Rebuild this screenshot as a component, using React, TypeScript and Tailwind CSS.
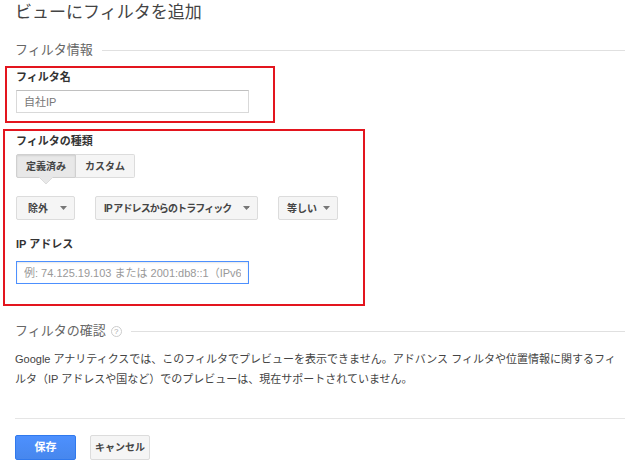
import React from "react";

const font = "font-['Liberation_Sans','Noto_Sans_CJK_JP',sans-serif]";

function Caret() {
  return (
    <svg width="7" height="4" viewBox="0 0 7 4" className="shrink-0">
      <path d="M0 0h7L3.5 4z" fill="#777" />
    </svg>
  );
}

function Dropdown({ label, width, extra = "" }: { label: string; width: string; extra?: string }) {
  return (
    <div
      className={`${width} h-[24px] shrink-0 flex items-center justify-between pl-[8px] pr-[7px] bg-[#f5f5f5] border border-[#dcdcdc] rounded-[2px] text-[10px] font-bold text-[#444] whitespace-nowrap`}
    >
      <span className={extra}>{label}</span>
      <Caret />
    </div>
  );
}

function SectionHeader({ title, help }: { title: string; help?: boolean }) {
  return (
    <div className="flex items-center h-[16px]">
      <span className="text-[13px] leading-[16px] text-[#666]">{title}</span>
      {help && (
        <span className="ml-[5px] w-[11px] h-[11px] rounded-full border border-[#ccc] text-[8px] leading-[9px] text-[#aaa] flex items-center justify-center">
          ?
        </span>
      )}
      <div className="flex-1 h-px bg-[#e0e0e0] ml-[9px]" />
    </div>
  );
}

export default function App() {
  return (
    <div className={`w-[640px] h-[468px] bg-white pl-[15px] pr-[15px] overflow-hidden ${font}`}>
      <h1 className="text-[17px] leading-[26px] text-[#444] font-normal">ビューにフィルタを追加</h1>

      <div className="mt-[16px]">
        <SectionHeader title="フィルタ情報" />
      </div>

      {/* フィルタ名 */}
      <div className="mt-[8px] ml-[-10px] w-[270px] border-2 border-[#e3151e] pl-[9px] pt-[2px] pb-[8px]">
        <div className="text-[11px] leading-[14px] font-bold text-[#333]">フィルタ名</div>
        <input
          placeholder="自社IP"
          className="mt-[6px] w-[233px] h-[23px] px-[7px] text-[11px] border border-[#d9d9d9] border-t-[#c0c0c0] outline-none placeholder:text-[#777]"
        />
      </div>

      {/* フィルタの種類 */}
      <div className="mt-[6px] ml-[-12px] w-[362px] border-2 border-[#e3151e] pl-[11px] pt-[3px] pb-[20px]">
        <div className="text-[11px] leading-[14px] font-bold text-[#333]">フィルタの種類</div>

        <div className="relative mt-[6px] flex w-fit">
          <div className="w-[60px] h-[24px] flex items-center justify-center bg-[#e8e8e8] border border-[#d0d0d0] rounded-l-[2px] text-[10px] font-bold text-[#444] shadow-[inset_0_1px_2px_rgba(0,0,0,0.1)]">
            定義済み
          </div>
          <div className="w-[59px] h-[24px] flex items-center justify-center bg-[#f5f5f5] border border-l-0 border-[#dcdcdc] rounded-r-[2px] text-[10px] font-bold text-[#444]">
            カスタム
          </div>
          <svg width="14" height="8" viewBox="0 0 14 8" className="absolute left-[23px] top-[23px]">
            <path d="M0 0h14L7 7z" fill="#e8e8e8" />
            <path d="M0 0L7 7L14 0" fill="none" stroke="#dcdcdc" strokeWidth="1" />
          </svg>
        </div>

        <div className="mt-[18px] flex gap-[20px]">
          <Dropdown label="除外" width="w-[59px]" extra="pl-[3px]" />
          <Dropdown label="IP アドレスからのトラフィック" width="w-[163px]" extra="tracking-[-0.9px]" />
          <Dropdown label="等しい" width="w-[60px]" />
        </div>

        <div className="mt-[17px] text-[11px] leading-[14px] font-bold text-[#333]">IP アドレス</div>
        <input
          placeholder="例: 74.125.19.103 または 2001:db8::1（IPv6 のアドレス）"
          className="mt-[10px] w-[233px] h-[23px] px-[7px] text-[11px] border border-[#4d90fe] outline-none placeholder:text-[#999] shadow-[inset_0_1px_2px_rgba(0,0,0,0.1)]"
        />
      </div>

      <div className="mt-[17px]">
        <SectionHeader title="フィルタの確認" help />
      </div>

      <p className="mt-[10px] text-[11px] leading-[20px] text-[#444]">
        Google アナリティクスでは、このフィルタでプレビューを表示できません。アドバンス フィルタや位置情報に関するフィルタ（IP アドレスや国など）でのプレビューは、現在サポートされていません。
      </p>

      <div className="mt-[29px] h-px bg-[#e5e5e5]" />

      <div className="mt-[16px] flex gap-[14px]">
        <button className="w-[61px] h-[25px] rounded-[2px] border border-[#3079ed] bg-gradient-to-b from-[#4d90fe] to-[#4787ed] text-white text-[11px] font-bold">
          保存
        </button>
        <button className="w-[60px] h-[25px] rounded-[2px] border border-[#dcdcdc] bg-[#f5f5f5] text-[#444] text-[10px] font-bold">
          キャンセル
        </button>
      </div>
    </div>
  );
}
